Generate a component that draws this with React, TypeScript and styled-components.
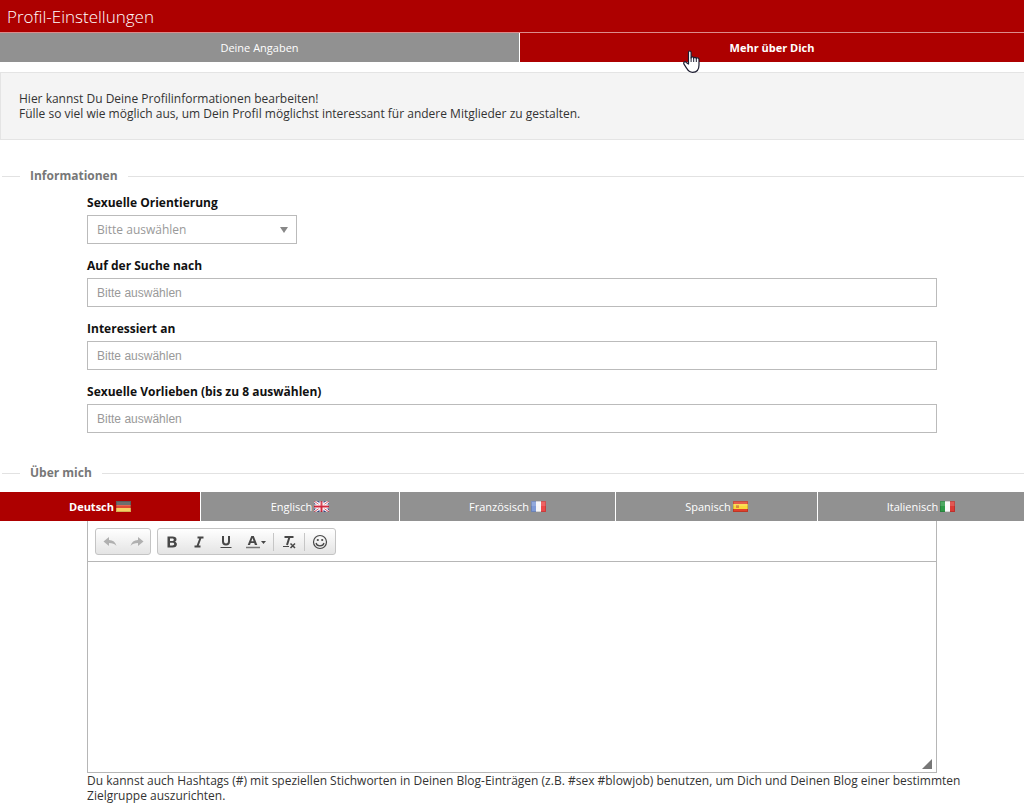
import React from "react";
import styled, { createGlobalStyle } from "styled-components";

const RED = "#ad0000";
const GREY = "#919191";

const GlobalStyle = createGlobalStyle`
  *, *::before, *::after { box-sizing: border-box; }
  body {
    margin: 0;
    background: #fff;
    color: #333;
    font: 12px/15px "Open Sans", sans-serif;
  }
  button, input, select, textarea { font: inherit; color: inherit; border-radius: 0; }
`;

const TitleBar = styled.header`
  background: ${RED};
  padding: 5px 7px 3px;
  border-bottom: 1px solid #dc8c8c;
`;

const Title = styled.h1`
  margin: 0;
  color: #fff;
  font-size: 17px;
  line-height: 24px;
  font-weight: 300;
`;

const TabRow = styled.nav<{ $columns: string }>`
  display: grid;
  grid-template-columns: ${(p) => p.$columns};
`;

const Tab = styled.button<{ $active?: boolean }>`
  position: relative;
  display: flex;
  align-items: center;
  justify-content: center;
  gap: 2px;
  height: 29px;
  padding: 0;
  border: 0;
  border-right: 1px solid #fff;
  background: ${(p) => (p.$active ? RED : GREY)};
  color: #fff;
  font-size: 11px;
  font-weight: ${(p) => (p.$active ? 700 : 400)};
  cursor: pointer;
  &:last-child { border-right: 0; }
`;

const Pointer = styled.svg`
  position: absolute;
  left: 163px;
  top: 17px;
`;

const Notice = styled.p`
  margin: 10px 0 0;
  padding: 18px;
  background: #f4f4f4;
  border: 1px solid #e4e4e4;
  border-right: 0;
`;

const Section = styled.section`
  padding-top: 28px;
`;

const SectionTitle = styled.h2`
  display: flex;
  align-items: center;
  gap: 10px;
  margin: 0 0 11px;
  padding-left: 2px;
  color: #777;
  font-size: 12px;
  line-height: 16px;
  font-weight: 700;
  &::before, &::after { content: ""; height: 1px; background: #e2e2e2; }
  &::before { width: 18px; }
  &::after { flex: 1; }
`;

const Column = styled.div`
  margin: 0 8.5%;
`;

const Fields = styled(Column)`
  display: grid;
  gap: 14px;
  padding-bottom: 4px;
`;

const Field = styled.div`
  display: flex;
  flex-direction: column;
  gap: 4px;
`;

const Label = styled.label`
  color: #111;
  font-size: 12px;
  line-height: 16px;
  font-weight: 700;
`;

const TextBox = styled.input`
  width: 100%;
  height: 29px;
  padding: 0 9px;
  border: 1px solid #bbb;
  background: #fff;
  font-family: "Liberation Sans", sans-serif;
  &::placeholder { color: #999; opacity: 1; }
`;

const SelectWrap = styled.div`
  position: relative;
  width: 210px;
  svg { position: absolute; right: 9px; top: 12px; pointer-events: none; }
`;

const Select = styled.select`
  appearance: none;
  display: block;
  width: 100%;
  height: 29px;
  padding: 0 9px;
  border: 1px solid #bbb;
  background: #fff;
  color: #999;
`;

const Editor = styled.div`
  border: 1px solid #b6b6b6;
  border-top: 0;
`;

const Toolbar = styled.div`
  display: flex;
  gap: 6px;
  padding: 7px 7px 6px;
  border-bottom: 1px solid #b6b6b6;
`;

const ToolGroup = styled.div`
  display: flex;
  align-items: center;
  height: 27px;
  border: 1px solid #c4c4c4;
  border-radius: 3px;
  background: linear-gradient(#fff, #e4e4e4);
`;

const toolWidths = { normal: 27, medium: 30, wide: 34 };

const Tool = styled.button<{ $size?: keyof typeof toolWidths }>`
  display: grid;
  place-items: center;
  width: ${(p) => toolWidths[p.$size ?? "normal"]}px;
  height: 25px;
  padding: 0;
  border: 0;
  background: none;
  color: #474747;
  &:disabled { color: #b0b0b0; }
`;

const Divider = styled.span`
  width: 1px;
  height: 18px;
  background: #c6c6c6;
`;

const EditArea = styled.div`
  position: relative;
  display: flex;
  svg { position: absolute; right: 4px; bottom: 3px; pointer-events: none; }
`;

const TextArea = styled.textarea`
  flex: 1;
  height: 210px;
  padding: 8px;
  border: 0;
  resize: none;
  background: #fff;
`;

const Hint = styled.p`
  margin: 0 -24px 0 0;
`;

const flagShapes: Record<string, React.ReactNode> = {
  de: (
    <>
      <path fill="#555" d="M0 0h15v4H0z" />
      <path fill="#df4a35" d="M0 4h15v3H0z" />
      <path fill="#f8cf63" d="M0 7h15v4H0z" />
    </>
  ),
  gb: (
    <>
      <path fill="#3d4f93" d="M0 0h15v11H0z" />
      <path stroke="#fff" strokeWidth="3" d="M0 0l15 11M15 0L0 11" />
      <path stroke="#d6455a" strokeWidth="1" d="M0 0l15 11M15 0L0 11" />
      <path stroke="#fff" strokeWidth="4" d="M7.5 0v11M0 5.500h15" />
      <path stroke="#d0283f" strokeWidth="2" d="M7.500 0v11M0 5.500h15" />
    </>
  ),
  fr: (
    <>
      <path fill="#7f9ad6" d="M0 0h5v11H0z" />
      <path fill="#f6f6f8" d="M5 0h5v11H5z" />
      <path fill="#ec4848" d="M10 0h5v11h-5z" />
    </>
  ),
  es: (
    <>
      <path fill="#e0402c" d="M0 0h15v11H0z" />
      <path fill="#fbd93a" d="M0 3h15v5H0z" />
      <path fill="#d98a3a" d="M3 4h3v3H3z" />
    </>
  ),
  it: (
    <>
      <path fill="#2f9a48" d="M0 0h5v11H0z" />
      <path fill="#fafafa" d="M5 0h5v11H5z" />
      <path fill="#dd3a35" d="M10 0h5v11h-5z" />
    </>
  ),
};

function Flag({ code }: { code: string }) {
  return (
    <svg width="15" height="11" viewBox="0 0 15 11" fill="none" aria-hidden="true">
      {flagShapes[code]}
      <path fill="#fff" opacity=".15" d="M0 0h15v5H0z" />
      <path stroke="#000" strokeOpacity=".15" d="M.5.5h14v10H.5z" />
    </svg>
  );
}

const iconShapes: Record<string, React.ReactNode> = {
  undo: <path fill="currentColor" d="M1.500 7.500L7 3v3c4 0 6.500 2 7.500 6-2-2.200-4-3-7.500-3v3z" />,
  redo: <path fill="currentColor" d="M14.500 7.500L9 3v3C5 6 2.500 8 1.500 12c2-2.200 4-3 7.500-3v3z" />,
  bold: (
    <path
      fill="currentColor"
      fillRule="evenodd"
      d="M3.500 2.500h5c2.500 0 4 .9 4 2.900 0 1.200-.7 2-1.800 2.300 1.400.3 2.200 1.200 2.200 2.500 0 2-1.500 3.300-4.100 3.300H3.500zM6 4.500v2.500h1.900c1.300 0 1.900-.4 1.900-1.300s-.6-1.200-1.900-1.200zm0 4.300v2.700h2.300c1.200 0 1.900-.4 1.900-1.400s-.7-1.300-1.900-1.300z"
    />
  ),
  italic: <path stroke="currentColor" strokeWidth="2" d="M6.500 3.500h6M3.500 12.500h6M9.500 4L6.500 12" />,
  underline: (
    <>
      <path stroke="currentColor" strokeWidth="2" d="M5 2v5.500c0 2 1 3 3 3s3-1 3-3V2" />
      <path stroke="currentColor" d="M2.500 13.500h11" />
    </>
  ),
  clear: (
    <>
      <path stroke="currentColor" strokeWidth="2" d="M3.500 3h9M8.500 3L6 11" />
      <path stroke="currentColor" d="M2 12.500h6" />
      <path stroke="currentColor" strokeWidth="1.500" d="M9.500 9.500l4.500 4.500M14 9.500L9.500 14" />
    </>
  ),
  smile: (
    <>
      <circle cx="8" cy="8" r="6.500" stroke="currentColor" strokeWidth="1.200" />
      <circle cx="5.800" cy="6" r="1.100" fill="currentColor" />
      <circle cx="10.200" cy="6" r="1.100" fill="currentColor" />
      <path stroke="currentColor" strokeWidth="1.200" d="M4 9c.5 2 2 2.800 4 2.800s3.500-.8 4-2.800" />
    </>
  ),
};

function Icon({ name }: { name: string }) {
  return (
    <svg width="16" height="16" viewBox="0 0 16 16" fill="none" aria-hidden="true">
      {iconShapes[name]}
    </svg>
  );
}

function ColorIcon() {
  return (
    <svg width="22" height="16" viewBox="0 0 22 16" fill="none" aria-hidden="true">
      <path
        fill="currentColor"
        fillRule="evenodd"
        d="M6.300 2h2.500l3.500 9H9.900l-.7-2H5.700L5 11H2.700zM6.300 7.300h2.300L7.500 4z"
      />
      <path stroke="#777" strokeWidth="1.500" d="M1 13.500h14" />
      <path fill="currentColor" d="M16 7h5l-2.500 3z" />
    </svg>
  );
}

const languages = [
  { code: "de", name: "Deutsch" },
  { code: "gb", name: "Englisch" },
  { code: "fr", name: "Französisch" },
  { code: "es", name: "Spanisch" },
  { code: "it", name: "Italienisch" },
];

const multiFields = [
  { id: "looking-for", label: "Auf der Suche nach" },
  { id: "interested-in", label: "Interessiert an" },
  { id: "preferences", label: "Sexuelle Vorlieben (bis zu 8 auswählen)" },
];

export default function App() {
  return (
    <>
      <GlobalStyle />
      <TitleBar>
        <Title>Profil-Einstellungen</Title>
      </TitleBar>
      <TabRow $columns="65fr 63fr">
        <Tab type="button">Deine Angaben</Tab>
        <Tab type="button" $active>
          Mehr über Dich
          <Pointer width="18" height="24" viewBox="0 0 18 24" aria-hidden="true">
            <path
              fill="#fff"
              stroke="#1c1c30"
              strokeWidth="1.200"
              strokeLinejoin="round"
              d="M5.500 14V2.500c0-2 2.600-2 2.600 0V8c0-1.500 2.600-1.500 2.600.3 0-1.500 2.600-1.300 2.600.4 0-1.300 2.700-1.200 2.700.8V15c0 4.500-2.500 7.300-6.300 7.300-3.200 0-4.700-1.500-6-4L1 14.200c-1-2 1-3.200 2.300-1.800z"
            />
            <path stroke="#1c1c30" d="M8.100 7.500V12M10.700 8v4M13.300 8.500V12" />
          </Pointer>
        </Tab>
      </TabRow>
      <main>
        <Notice>
          Hier kannst Du Deine Profilinformationen bearbeiten!
          <br />
          Fülle so viel wie möglich aus, um Dein Profil möglichst interessant für andere Mitglieder zu gestalten.
        </Notice>
        <Section>
          <SectionTitle>Informationen</SectionTitle>
          <Fields>
            <Field>
              <Label htmlFor="orientation">Sexuelle Orientierung</Label>
              <SelectWrap>
                <Select id="orientation">
                  <option>Bitte auswählen</option>
                </Select>
                <svg width="8" height="6" viewBox="0 0 8 6" aria-hidden="true">
                  <path fill="#888" d="M0 0h8L4 6z" />
                </svg>
              </SelectWrap>
            </Field>
            {multiFields.map((f) => (
              <Field key={f.id}>
                <Label htmlFor={f.id}>{f.label}</Label>
                <TextBox id={f.id} type="text" placeholder="Bitte auswählen" />
              </Field>
            ))}
          </Fields>
        </Section>
        <Section>
          <SectionTitle>Über mich</SectionTitle>
          <TabRow $columns="201fr 199fr 216fr 202fr 206fr">
            {languages.map((l, i) => (
              <Tab key={l.code} type="button" $active={i === 0}>
                {l.name}
                <Flag code={l.code} />
              </Tab>
            ))}
          </TabRow>
          <Column>
            <Editor>
              <Toolbar>
                <ToolGroup>
                  <Tool type="button" disabled aria-label="Rückgängig"><Icon name="undo" /></Tool>
                  <Tool type="button" disabled aria-label="Wiederherstellen"><Icon name="redo" /></Tool>
                </ToolGroup>
                <ToolGroup>
                  <Tool type="button" aria-label="Fett"><Icon name="bold" /></Tool>
                  <Tool type="button" aria-label="Kursiv"><Icon name="italic" /></Tool>
                  <Tool type="button" aria-label="Unterstrichen"><Icon name="underline" /></Tool>
                  <Tool type="button" $size="wide" aria-label="Textfarbe"><ColorIcon /></Tool>
                  <Divider />
                  <Tool type="button" $size="medium" aria-label="Formatierung entfernen"><Icon name="clear" /></Tool>
                  <Divider />
                  <Tool type="button" $size="medium" aria-label="Smiley"><Icon name="smile" /></Tool>
                </ToolGroup>
              </Toolbar>
              <EditArea>
                <TextArea aria-label="Über mich" />
                <svg width="10" height="10" viewBox="0 0 10 10" aria-hidden="true">
                  <path fill="#777" d="M10 0v10H0z" />
                </svg>
              </EditArea>
            </Editor>
            <Hint>
              Du kannst auch Hashtags (#) mit speziellen Stichworten in Deinen Blog-Einträgen (z.B. #sex #blowjob)
              benutzen, um Dich und Deinen Blog einer bestimmten Zielgruppe auszurichten.
            </Hint>
          </Column>
        </Section>
      </main>
    </>
  );
}
